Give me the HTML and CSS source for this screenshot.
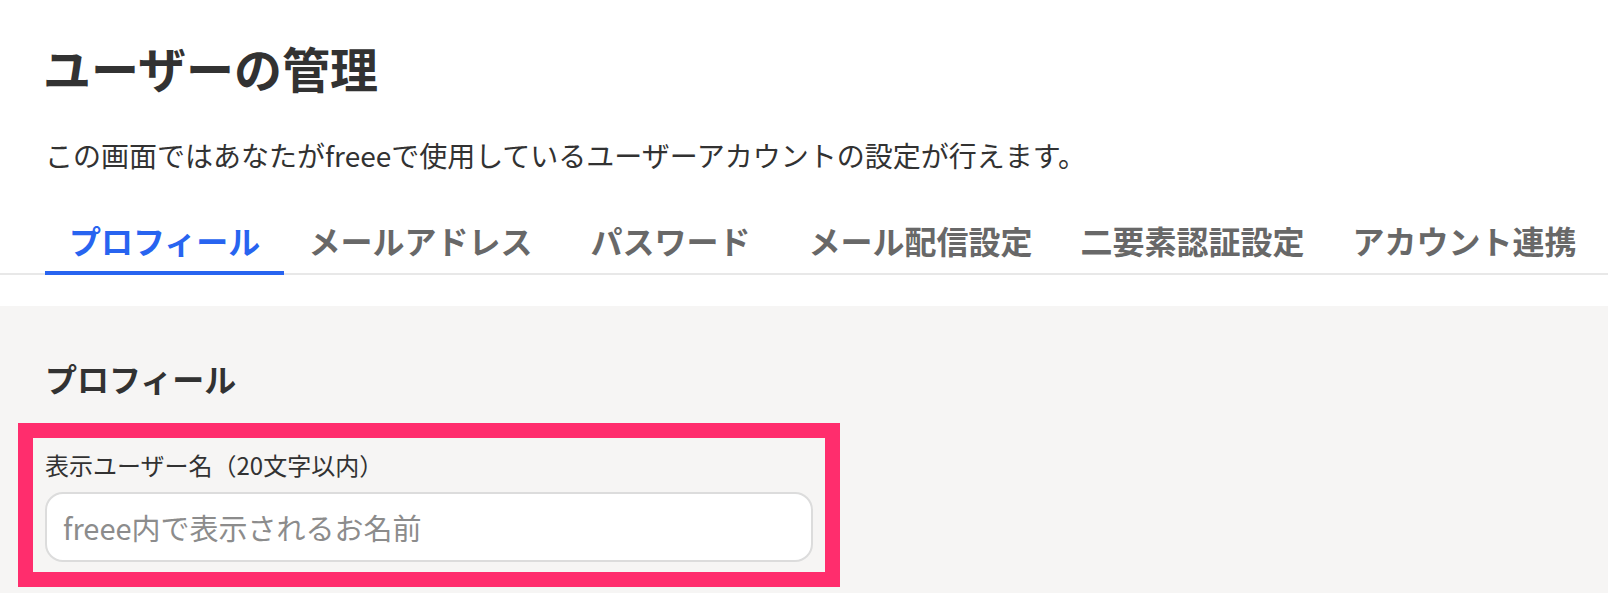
FILE: index.html
```html
<!DOCTYPE html>
<html lang="ja">
<head>
<meta charset="utf-8">
<title>ユーザーの管理</title>
<link rel="stylesheet" href="styles.css">
</head>
<body>
  <header class="page-header">
    <h1 class="page-title">ユーザーの管理</h1>
    <p class="page-desc">この画面ではあなたがfreeeで使用しているユーザーアカウントの設定が行えます。</p>
  </header>
  <nav class="tabs">
    <a class="tab tab-active">プロフィール</a>
    <a class="tab">メールアドレス</a>
    <a class="tab">パスワード</a>
    <a class="tab">メール配信設定</a>
    <a class="tab">二要素認証設定</a>
    <a class="tab">アカウント連携</a>
  </nav>
  <main class="content">
    <h2 class="section-title">プロフィール</h2>
    <div class="field-highlight">
      <label class="field-label" for="display-name">表示ユーザー名（20文字以内）</label>
      <input class="field-input" id="display-name" type="text" placeholder="freee内で表示されるお名前">
    </div>
  </main>
</body>
</html>
```

FILE: styles.css
```css
html, body {
  margin: 0;
  padding: 0;
}

body {
  font-family: "Noto Sans CJK JP", "Noto Sans", sans-serif;
  color: #323232;
  background: #ffffff;
  min-height: 100vh;
  display: flex;
  flex-direction: column;
  overflow: hidden;
}

.page-header {
  padding: 43px 45px 0 45px;
}

.page-title {
  margin: 0 0 0 -2px;
  font-size: 48px;
  line-height: 48px;
  font-weight: 700;
  color: #323232;
}

.page-desc {
  margin: 50px 0 0 0;
  font-size: 28px;
  line-height: 28px;
  font-weight: 400;
  color: #323232;
}

.tabs {
  display: flex;
  margin: 56px 0 0 0;
  padding: 0 0 0 45px;
  border-bottom: 2px solid #e8e8e8;
}

.tab {
  min-width: 228px;
  box-sizing: border-box;
  padding: 0 24px 15px 24px;
  margin-bottom: -2px;
  font-size: 32px;
  line-height: 31px;
  font-weight: 700;
  color: #686868;
  text-align: center;
  white-space: nowrap;
  border-bottom: 4px solid transparent;
  cursor: pointer;
}

.tab-active {
  color: #2864f0;
  border-bottom-color: #2864f0;
}

.content {
  flex: 1;
  margin-top: 31px;
  background: #f6f5f4;
  padding: 57px 45px 0 45px;
}

.section-title {
  margin: 0;
  font-size: 32px;
  line-height: 31px;
  font-weight: 700;
  color: #323232;
}

.field-highlight {
  margin: 29px 0 0 -27px;
  width: 822px;
  box-sizing: border-box;
  border: 15px solid #ff2d6d;
  padding: 15px 12px 10px 12px;
  display: flex;
  flex-direction: column;
}

.field-label {
  font-size: 24px;
  line-height: 24px;
  color: #323232;
  margin-bottom: 15px;
}

.field-input {
  box-sizing: border-box;
  height: 70px;
  width: 100%;
  border: 2px solid #dcdcdc;
  border-radius: 18px;
  background: #ffffff;
  padding: 0 16px;
  font-family: "Noto Sans CJK JP", "Noto Sans", sans-serif;
  font-size: 29px;
  color: #323232;
  outline: none;
}

.field-input::placeholder {
  color: #8c8c8c;
}
```
